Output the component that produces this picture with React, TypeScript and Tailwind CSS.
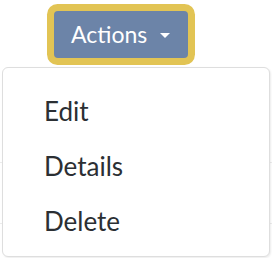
import React from 'react';

const items = ['Edit', 'Details', 'Delete'];

const App = () => {
  return (
    <div className="relative w-[272px] h-[258px] overflow-hidden bg-white font-['Lato',sans-serif]">
      {/* table rows behind the menu */}
      <div className="absolute left-0 right-0 top-[162px] border-t border-[#ececec]" />
      <div className="absolute left-0 right-0 top-[223px] border-t border-[#ececec]" />

      <div className="relative pl-[54px] pt-[11px]">
        <button className="flex h-[47px] w-[134px] items-center rounded-[4px] bg-[#6c84a8] pl-[17px] text-[23px] leading-none text-white ring-[7px] ring-[#e2c454]">
          <span>Actions</span>
          <span className="ml-[13px] mt-[1px] h-0 w-0 border-x-[5px] border-t-[5px] border-x-transparent border-t-white" />
        </button>
      </div>

      {/* Dropdown */}
      <div className="absolute left-[2px] top-[67px] h-[190px] w-[268px] rounded-[6px] border border-[#dedede] bg-white pt-[16px] shadow-[1px_1px_2px_rgba(0,0,0,0.08)]">
        {items.map((item) => (
          <div key={item} className="pl-[41px] text-[26px] leading-[55px] text-[#2b2f33]">
            {item}
          </div>
        ))}
      </div>
    </div>
  );
};

export default App;
